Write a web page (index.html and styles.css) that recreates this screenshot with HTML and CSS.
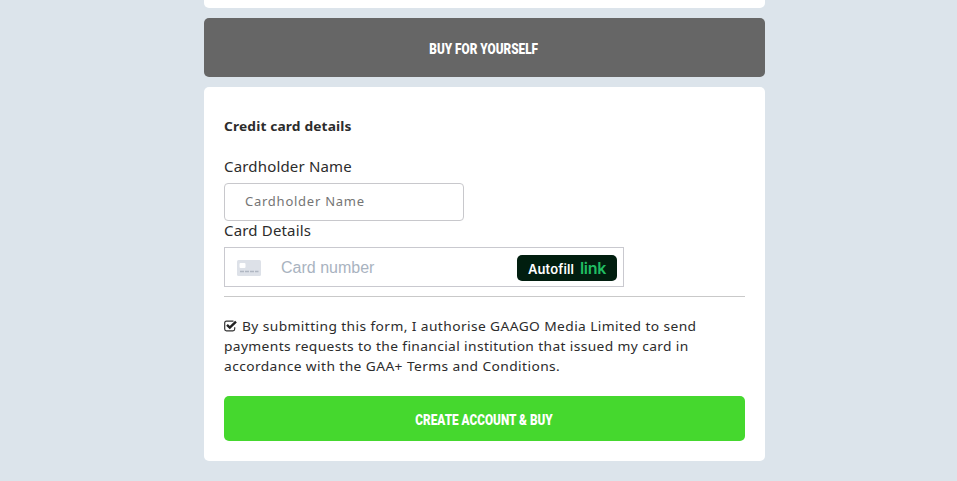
FILE: index.html
```html
<!DOCTYPE html>
<html lang="en">
<head>
<meta charset="utf-8">
<title>Payment</title>
<link rel="stylesheet" href="styles.css">
</head>
<body>
<main class="page">
  <section class="panel panel-previous"></section>
  <button class="buy-self" type="button"><span class="caption">BUY FOR YOURSELF</span></button>
  <form class="panel payment">
    <h2 class="heading"><span class="wide">Credit card details</span></h2>
    <label class="label label-name" for="name">Cardholder Name</label>
    <input class="name-input" id="name" type="text" placeholder="Cardholder Name">
    <div class="label label-card">Card Details</div>
    <div class="card-field">
      <svg class="card-icon" width="24" height="16" viewBox="0 0 24 16">
        <rect width="24" height="16" rx="1.5" fill="#dde1e8"/>
        <rect x="2.5" y="3" width="6" height="5" rx="1" fill="#fff"/>
        <path d="M3 11.5h4M8 11.5h4M13 11.5h4M18 11.5h3.5" stroke="#b0b7c2" stroke-width="1.3"/>
      </svg>
      <span class="card-number">Card number</span>
      <span class="autofill"><span class="autofill-text">Autofill</span><span class="autofill-link">link</span></span>
    </div>
    <hr class="rule">
    <p class="consent">
      <span class="line"><svg class="check" width="13" height="12" viewBox="0 0 13 12" fill="none"><path d="M9.5 1.2H2.5Q.7 1.2.7 3v6q0 1.8 1.8 1.8h6.4q1.8 0 1.8-1.8V7.2" stroke="#333" stroke-width="1.2"/><path d="M3 4.8 5.8 7.6 12 1.6" stroke="#222" stroke-width="2.4"/></svg><span class="wide text-one">By submitting this form, I authorise GAAGO Media Limited to send</span></span>
      <span class="line"><span class="wide text-two">payments requests to the financial institution that issued my card in</span></span>
      <span class="line"><span class="wide text-three">accordance with the GAA+ Terms and Conditions.</span></span>
    </p>
    <button class="submit" type="button"><span class="caption">CREATE ACCOUNT &amp; BUY</span></button>
  </form>
</main>
</body>
</html>
```

FILE: styles.css
```css
* { box-sizing: border-box; }
body {
  margin: 0;
  background: #dce4eb;
  color: #2c2c2c;
  font-family: "Noto Sans", sans-serif;
}
.page {
  width: 561px;
  height: 481px;
  margin-left: 204px;
  display: flex;
  flex-direction: column;
  gap: 10px;
}
.panel { background: #fff; border-radius: 5px; }
.panel-previous { height: 8px; border-radius: 0 0 5px 5px; }
.buy-self, .submit {
  display: flex;
  align-items: center;
  justify-content: center;
  border: 0;
  border-radius: 5px;
  color: #fff;
  font: 900 15px/20px Roboto, sans-serif;
  padding: 0;
}
.buy-self { height: 59px; background: #666; padding-top: 2px; }
.caption { display: block; white-space: nowrap; transform: translateX(-.5px) scaleX(.785); }
.payment {
  height: 374px;
  padding: 29px 20px 20px;
  display: flex;
  flex-direction: column;
}
.wide { display: inline-block; transform: scaleX(1.06); transform-origin: left center; }
.heading { margin: 0; font-size: 13px; line-height: 20px; font-weight: 700; letter-spacing: .12px; }
.label { font-size: 15px; line-height: 20px; letter-spacing: .17px; white-space: nowrap; }
.label-name { margin-top: 20px; }
.name-input {
  width: 240px;
  height: 38px;
  margin: 7px 0 0;
  padding: 0 20px 2px;
  border: 1px solid #c8c8cc;
  border-radius: 4px;
  font: 13px "Noto Sans", sans-serif;
  letter-spacing: .75px;
}
.name-input::placeholder { color: #757575; }
.card-field {
  width: 400px;
  height: 40px;
  margin-top: 7px;
  padding: 0 6px 0 12px;
  border: 1px solid #c9c9cf;
  display: flex;
  align-items: center;
}
.card-icon { margin-top: 1px; }
.card-number { margin: 2px 0 0 20px; color: #a9b3bf; font: 16px/20px "Liberation Sans", sans-serif; }
.autofill {
  width: 100px;
  height: 26px;
  margin-left: auto;
  margin-top: 1px;
  border-radius: 5px;
  background: #011e0f;
  display: flex;
  justify-content: center;
  align-items: center;
  gap: 6px;
  color: #fff;
  font: 600 13px/20px Inter, sans-serif;
}
.autofill-text { padding-top: 3px; letter-spacing: .1px; }
.autofill-link { color: #20bd62; font: 600 16px/20px Inter, sans-serif; letter-spacing: -.3px; }
.label-card { margin-top: -1px; }
.rule { width: 521px; height: 1px; margin: 9px 0 0; border: 0; background: #c9c9c9; }
.consent { margin: 19px 0 0; font-size: 13px; line-height: 20px; }
.line { display: flex; align-items: center; white-space: nowrap; }
.text-one { margin-left: 5px; letter-spacing: .375px; }
.text-two { letter-spacing: .35px; }
.text-three { letter-spacing: .38px; }
.submit { width: 521px; height: 45px; margin-top: auto; background: #45d82e; padding-top: 2px; }
```
